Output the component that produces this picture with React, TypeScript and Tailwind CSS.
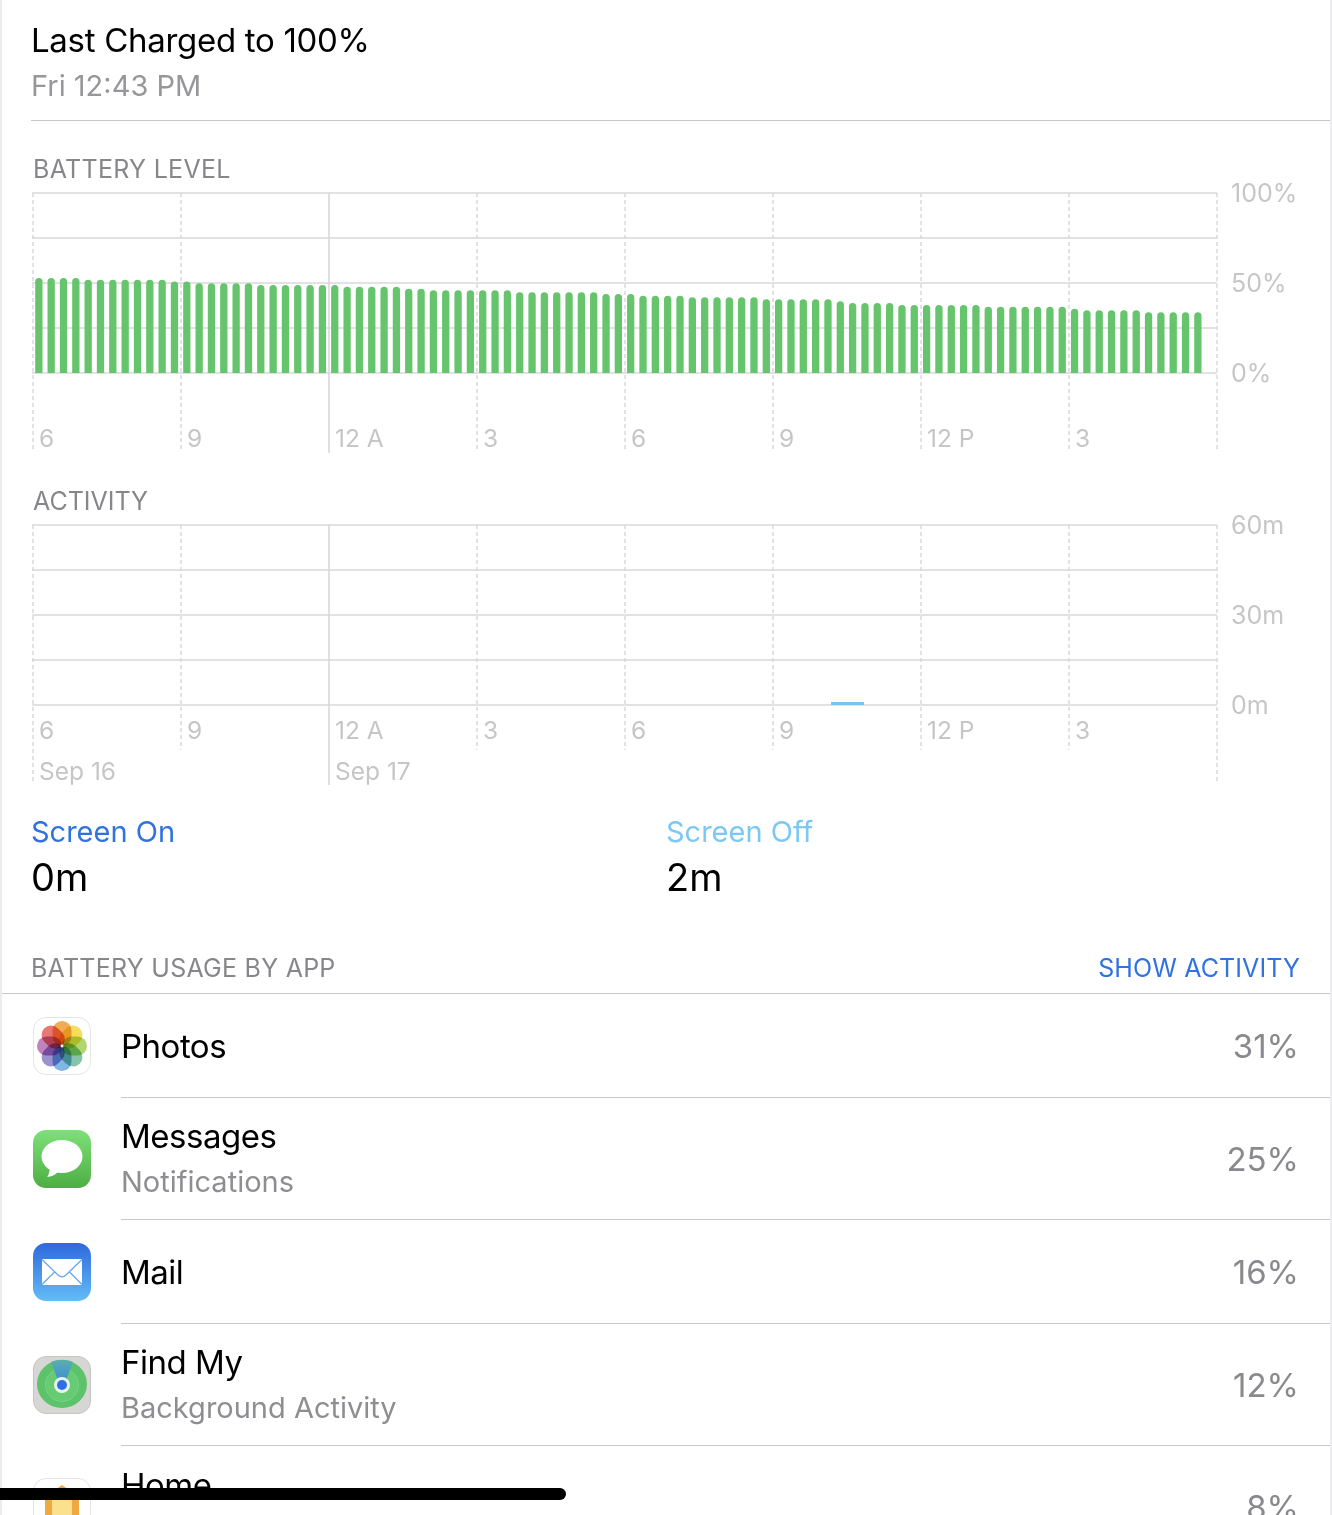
import React from 'react';

const HOURS = ['6', '9', '12 A', '3', '6', '9', '12 P', '3'];
const TICKS = [0, 148, 296, 444, 592, 740, 888, 1036, 1184];

// [how many bars, y of the bar top relative to the plot top]
const BAR_RUNS: [number, number][] = [
  [4, 85], [7, 86.8], [2, 88.6], [5, 90.3], [7, 92], [5, 93.7], [2, 95.7], [7, 97.4], [7, 99.3],
  [3, 101], [4, 102.7], [6, 104.3], [6, 106.3], [1, 108.3], [4, 110], [7, 112], [7, 113.7],
  [1, 115.7], [5, 117.3], [5, 119.3],
];
const BAR_TOPS = BAR_RUNS.flatMap(([count, top]) => Array<number>(count).fill(top));

function GridLines({ height, rows, long }: { height: number; rows: number; long: Record<number, number> }) {
  return (
    <svg className="absolute top-0 left-0 overflow-visible" width="1186" height="262" fill="none">
      {Array.from({ length: rows }).map((_, i) => (
        <line key={i} x1="0" x2="1185" y1={i * 45} y2={i * 45} stroke="#e2e2e4" strokeWidth="2" />
      ))}
      {TICKS.map((x, i) => (
        <line
          key={x}
          x1={x + 1}
          x2={x + 1}
          y1="0"
          y2={long[i] ?? height - 3}
          stroke={i === 2 ? '#d6d6d8' : '#d9d9db'}
          strokeWidth="1.5"
          strokeDasharray={i === 2 ? undefined : '4 3'}
        />
      ))}
    </svg>
  );
}

function YLabels({ labels }: { labels: string[] }) {
  return (
    <div className="mt-[1px] ml-[15px] flex h-[180px] flex-col justify-between text-[25px] text-[#c6c6c8]">
      {labels.map((label) => (
        <div key={label} className="flex h-0 items-center">
          {label}
        </div>
      ))}
    </div>
  );
}

function HourLabels() {
  return (
    <div className="grid w-[1184px] grid-cols-8 text-[24.5px] leading-[30px] text-[#c6c6c8]">
      {HOURS.map((h, i) => (
        <div key={i} className="pl-[7px]">
          {h}
        </div>
      ))}
    </div>
  );
}

function BatteryChart() {
  return (
    <div className="relative ml-[32px] h-[260px]">
      <GridLines height={260} rows={5} long={{ 2: 260 }} />
      <svg className="absolute top-0 left-0" width="1186" height="181">
        {BAR_TOPS.map((top, i) => {
          const x = 3.2 + i * 12.33;
          return (
            <path
              key={i}
              d={`M${x} 180V${top + 3.6}a3.65 3.65 0 0 1 7.3 0V180Z`}
              fill="#66c56c"
            />
          );
        })}
      </svg>
      <div className="relative flex">
        <div className="w-[1184px]" />
        <YLabels labels={['100%', '50%', '0%']} />
      </div>
      <div className="relative mt-[49px]">
        <HourLabels />
      </div>
    </div>
  );
}

function ActivityChart() {
  return (
    <div className="relative ml-[32px] h-[262px]">
      <GridLines height={228} rows={5} long={{ 0: 256, 2: 260, 8: 256 }} />
      <svg className="absolute top-0 left-0" width="1186" height="181">
        <rect x="799" y="177" width="33" height="3" fill="#7cc4ee" />
      </svg>
      <div className="relative flex">
        <div className="w-[1184px]" />
        <YLabels labels={['60m', '30m', '0m']} />
      </div>
      <div className="relative mt-[9px]">
        <HourLabels />
      </div>
      <div className="relative mt-[11px] grid w-[1184px] grid-cols-4 text-[24.5px] leading-[30px] text-[#c6c6c8]">
        <div className="pl-[7px]">Sep 16</div>
        <div className="pl-[7px]">Sep 17</div>
      </div>
    </div>
  );
}

function PhotosIcon() {
  const petals = ['#ef9f37', '#f3d83f', '#a4cf56', '#6fba9a', '#69a9e0', '#8a7fc6', '#b56db1', '#e5605a'];
  return (
    <svg width="58" height="58" viewBox="0 0 58 58">
      <rect x="0.5" y="0.5" width="57" height="57" rx="12.5" fill="#fff" stroke="#e4e4e2" />
      {petals.map((color, i) => (
        <rect
          key={color}
          x="19.5"
          y="4"
          width="19"
          height="25"
          rx="9.5"
          fill={color}
          opacity="0.85"
          className="mix-blend-multiply"
          transform={`rotate(${i * 45} 29 29)`}
        />
      ))}
      <circle cx="29" cy="29" r="1.4" fill="#fff" />
    </svg>
  );
}

function MessagesIcon() {
  return (
    <svg width="58" height="58" viewBox="0 0 58 58">
      <defs>
        <linearGradient id="msg" x1="0" y1="0" x2="0" y2="1">
          <stop offset="0" stopColor="#7fe07a" />
          <stop offset="1" stopColor="#4cae42" />
        </linearGradient>
      </defs>
      <rect width="58" height="58" rx="13" fill="url(#msg)" />
      <ellipse cx="29" cy="26.5" rx="20.5" ry="16.5" fill="#fff" />
      <path d="M17 37c0 3.5-1 7-2.800 10 3.800-.3 7.500-1.800 10.300-4.500Z" fill="#fff" />
    </svg>
  );
}

function MailIcon() {
  return (
    <svg width="58" height="58" viewBox="0 0 58 58">
      <defs>
        <linearGradient id="mail" x1="0" y1="0" x2="0" y2="1">
          <stop offset="0" stopColor="#2f68dc" />
          <stop offset="1" stopColor="#62bdf6" />
        </linearGradient>
      </defs>
      <rect width="58" height="58" rx="13" fill="url(#mail)" />
      <rect x="9" y="16" width="40" height="26" fill="#fff" />
      <path
        d="M9 16.500 25 32c2.400 2.300 5.600 2.300 8 0L49 16.500M9 41.500l12.500-12.500M49 41.500 36.500 29"
        fill="none"
        stroke="#6aa6ee"
        strokeWidth="1.300"
      />
    </svg>
  );
}

function FindMyIcon() {
  return (
    <svg width="58" height="58" viewBox="0 0 58 58">
      <defs>
        <linearGradient id="find" x1="0" y1="0" x2="0" y2="1">
          <stop offset="0" stopColor="#5cb0a8" />
          <stop offset="0.5" stopColor="#4a9cc8" />
          <stop offset="1" stopColor="#3f8fc0" />
        </linearGradient>
      </defs>
      <rect x="0.5" y="0.5" width="57" height="57" rx="12.5" fill="#d6d6d4" stroke="#c6c6c4" />
      <ellipse cx="29" cy="28" rx="25" ry="24" fill="#5cc36a" />
      <circle cx="29" cy="29" r="16.5" fill="#67cb74" stroke="#79d384" strokeWidth="1" />
      <path d="M18 6c7-3 15-3 22 0l-8 21h-6Z" fill="url(#find)" />
      <circle cx="29" cy="29" r="8" fill="#e8f1ec" />
      <circle cx="29" cy="29" r="5" fill="#2f6fe6" />
    </svg>
  );
}

function HomeIcon() {
  return (
    <svg width="58" height="58" viewBox="0 0 58 58">
      <rect x="0.5" y="0.5" width="57" height="57" rx="12.5" fill="#fff" stroke="#e4e4e2" />
      <path d="M29 7 7 22h5v30h34V22h5Z" fill="#f0a940" />
      <rect x="19" y="22" width="20" height="30" fill="#fbe08e" />
    </svg>
  );
}

const APPS = [
  { name: 'Photos', percent: '31%', icon: <PhotosIcon /> },
  { name: 'Messages', sub: 'Notifications', percent: '25%', icon: <MessagesIcon /> },
  { name: 'Mail', percent: '16%', icon: <MailIcon /> },
  { name: 'Find My', sub: 'Background Activity', percent: '12%', icon: <FindMyIcon /> },
  { name: 'Home', sub: '\u00a0', percent: '8%', icon: <HomeIcon />, last: true },
];

function AppRow({ app }: { app: (typeof APPS)[number] }) {
  return (
    <div className={`flex items-center pl-[33px] ${app.sub ? 'h-[122px]' : 'h-[104px]'}`}>
      <div className="w-[58px] shrink-0">{app.icon}</div>
      <div className={`ml-[30px] flex h-full flex-1 items-center pr-[33px] ${app.last ? '' : 'border-b border-[#c8c8ca]'}`}>
        <div className={`flex-1 ${app.sub ? 'pt-[1px]' : ''}`}>
          <div className="text-[33px] leading-[44px] tracking-[-0.5px] text-black">{app.name}</div>
          {app.sub && <div className="mt-[2px] text-[29px] leading-[44px] text-[#8e8e92]">{app.sub}</div>}
        </div>
        <div className="pt-[2px] text-[33px] text-[#8a8a8e]">{app.percent}</div>
      </div>
    </div>
  );
}

export default function App() {
  return (
    <div
      className="relative h-[1515px] w-[1332px] overflow-hidden bg-white"
      style={{ fontFamily: 'Inter, "Liberation Sans", sans-serif' }}
    >
      {/* Last charged */}
      <div className="ml-[31px] h-[121px] border-b border-[#c8c8ca] pt-[16px]">
        <div className="text-[33px] leading-[48px] tracking-[-0.3px] text-black">Last Charged to 100%</div>
        <div className="pt-[1px] text-[29px] leading-[42px] text-[#97979b]">Fri 12:43 PM</div>
      </div>

      {/* Battery level */}
      <div className="pt-[32px] pl-[33px] text-[25px] leading-[32px] tracking-[0.3px] text-[#87878b]">BATTERY LEVEL</div>
      <div className="h-[8px]" />
      <BatteryChart />

      {/* Activity */}
      <div className="mt-[32px] pl-[33px] text-[25px] leading-[32px] text-[#87878b]">ACTIVITY</div>
      <div className="h-[8px]" />
      <ActivityChart />

      {/* Screen on / off */}
      <div className="mt-[25px] grid grid-cols-[635px_1fr] pl-[31px]">
        <div>
          <div className="text-[29px] leading-[40px] text-[#2f72e0]">Screen On</div>
          <div className="pt-[1px] text-[38px] leading-[48px] text-black">0m</div>
        </div>
        <div>
          <div className="text-[29px] leading-[40px] text-[#7cc8f4]">Screen Off</div>
          <div className="pt-[1px] text-[38px] leading-[48px] text-black">2m</div>
        </div>
      </div>

      {/* Usage header */}
      <div className="mt-[45px] flex h-[48px] items-center justify-between border-b border-[#c8c8ca] pr-[32px] pb-[2px] pl-[31px] text-[25px]">
        <span className="tracking-[0.25px] text-[#87878b]">BATTERY USAGE BY APP</span>
        <span className="tracking-[0.1px] text-[#2f72e0]">SHOW ACTIVITY</span>
      </div>

      {APPS.map((app) => (
        <AppRow key={app.name} app={app} />
      ))}

      {/* screenshot edges */}
      <div className="absolute inset-y-0 left-0 w-[2px] bg-[#ececee]" />
      <div className="absolute inset-y-0 right-0 w-[2px] bg-[#ececee]" />

      {/* home indicator */}
      <div className="absolute top-[1488px] left-0 h-[12px] w-[566px] rounded-r-full bg-black" />
    </div>
  );
}
